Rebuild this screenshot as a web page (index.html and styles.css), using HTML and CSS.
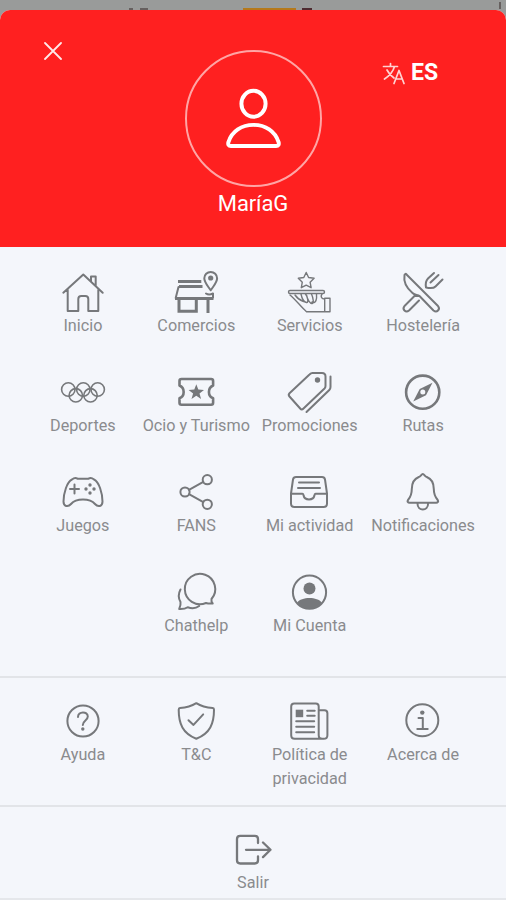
FILE: index.html
```html
<!DOCTYPE html>
<html lang="es">
<head>
<meta charset="utf-8">
<title>Menú</title>
<link rel="stylesheet" href="styles.css">
</head>
<body>
<div class="backdrop"><i class="mark m1"></i><i class="mark m2"></i><i class="mark amber"></i><i class="mark m3"></i><i class="mark m4"></i></div>
<main class="sheet">
  <header class="profile">
    <svg class="close" viewBox="0 0 20 20"><path d="M2 2 18 18M18 2 2 18"/></svg>
    <div class="user">
      <div class="avatar">
        <svg viewBox="0 0 60 64"><ellipse cx="30" cy="17" rx="12.3" ry="13.2"/><path d="M7 60h46q3.500 0 2.500-4C52 45 42 38.500 30 38.500S8 45 4.500 56q-1 4 2.500 4z"/></svg>
      </div>
      <div class="name">MaríaG</div>
    </div>
    <div class="lang">
      <svg viewBox="0 0 24 24"><path d="M1.500 4.500h14M8.500 1.500v3M12.500 4.500C11 10 7 14 2.500 17M5 8c2 4 4 6 7 8M12 21.500l5-13 5 13M13.800 17h6.400"/></svg>
      <span>ES</span>
    </div>
  </header>

  <nav class="grid main-grid">
    <a class="item"><svg viewBox="0 0 48 45"><path d="M4.300 23.700 24.300 5.500 43.700 23.700M8.700 20.500V42h10.600V30q0-3 3-3h4q3 0 3 3v12h10V20.500M32 12V7.500h4.700v9"/></svg><span>Inicio</span></a>
    <a class="item"><svg viewBox="0 0 48 45"><g class="bold"><path d="M6 12.500h23.300M7 17.500h23.500M3 29.500h38.500M7 31v11.300h17.300V31M36 31v13"/></g><path d="M6.500 18 3.700 29M34 24.500q3 2 7 0v4"/><path d="M38.700 21.300c-3-4.500-6.400-7.800-6.400-12a6.400 6.400 0 0 1 12.800 0c0 4.200-3.400 7.500-6.400 12z"/><circle class="fill" cx="38.700" cy="9" r="2.600"/></svg><span>Comercios</span></a>
    <a class="item"><svg class="thin" viewBox="0 0 48 45"><path d="m20.200 3.500 2.400 5 5.500.8-4 3.900 1 5.500-4.900-2.600-4.900 2.600 1-5.500-4-3.900 5.500-.8z"/><rect x="2.500" y="21.500" width="36" height="3" rx="1.500"/><path d="M4 26c6 5 11 12 16.500 16.700H38M9 26c2 3 6 5.500 8.500 6.500M15 25c1 5 3 8 5.500 8.500s1-6-1-8.500M20.500 26c1 5 3.500 8.500 5.500 8.500s1.500-5-.5-9.500M26 33c4 2 5-3 4.500-8M36 25c-2 3 0 5 2.500 5M38.700 29.300H44v13.400h-5.300z"/></svg><span>Servicios</span></a>
    <a class="item"><svg viewBox="0 0 48 45"><path d="M5.500 6c-1 6 2 13 8 18 3 3 5 1 7 3l14 14.500q2.500 2 4.500 0t0-4.500L7.500 5.500q-1-1.500-2 .5zM20 27l-4.500 0-10 10q-2 2.500 0 4.500t4.500 0L20 31.500M27 18.500q-1-6 2-9L35 4M27 18.500q7 1.500 9.500-1L43.500 10.500M31.500 13.500l8-7.500"/></svg><span>Hostelería</span></a>

    <a class="item"><svg class="thin rings" viewBox="0 0 48 45"><circle cx="9.300" cy="20.500" r="6.700"/><circle cx="24.300" cy="20.500" r="6.700"/><circle cx="38.700" cy="20.500" r="6.700"/><circle cx="16.800" cy="26.300" r="6.700"/><circle cx="31.500" cy="26.300" r="6.700"/></svg><span>Deportes</span></a>
    <a class="item"><svg viewBox="0 0 48 45"><path class="ticket" d="M9.500 10h29.600q2 0 2 2v4.500a7 7 0 0 0 0 12.800v4.500q0 2-2 2H9.500q-2 0-2-2v-4.500a7 7 0 0 0 0-12.800V12q0-2 2-2z"/><path class="fill" d="m24.300 15.300 2 5.300 5.700.3-4.500 3.500 1.600 5.600-4.800-3.200-4.800 3.200 1.600-5.600-4.500-3.500 5.700-.3z"/></svg><span>Ocio y Turismo</span></a>
    <a class="item"><svg viewBox="0 0 48 45"><path d="M26.500 4H36q3.500 0 3.500 3.500V17q0 1.500-1 2.500l-21 20q-1.800 1.800-3.300 0L3.500 27.500q-1.500-1.700 0-3.300l20-18.700Q25 4 26.500 4zM44.500 7.500V18q0 1.800-1.200 3L20.500 43"/><circle class="fill" cx="31.500" cy="11" r="2.700"/></svg><span>Promociones</span></a>
    <a class="item"><svg viewBox="0 0 48 45"><circle class="heavy" cx="23.700" cy="23.200" r="16.600"/><path class="fill" fill-rule="evenodd" d="M33.500 13.700 27 26.300 14.200 32.500l6.500-12.500zM23.800 20.600a2.500 2.500 0 1 0 0 5 2.500 2.500 0 0 0 0-5z"/></svg><span>Rutas</span></a>

    <a class="item"><svg viewBox="0 0 48 45"><path d="M13 10.500q3-2.500 5.500-.8h11Q32 8 35 10.500c5 2 8.500 14 8.500 22 0 5-4.500 6-7.500 2.500-5-6-19-6-24 0-3 3.500-7.500 2.500-7.500-2.500 0-8 3.500-20 8.500-22zM11 20h9M15.500 15.500v9"/><g class="fill"><circle cx="31" cy="16" r="1.700"/><circle cx="31" cy="24" r="1.700"/><circle cx="27" cy="20" r="1.700"/><circle cx="35" cy="20" r="1.700"/></g></svg><span>Juegos</span></a>
    <a class="item"><svg viewBox="0 0 48 45"><circle cx="35.300" cy="10.700" r="4.600"/><circle cx="13" cy="23" r="4.600"/><circle cx="35.300" cy="35.300" r="4.600"/><path d="m17 20.800 14.300-7.900M17 25.200l14.300 7.900"/></svg><span>FANS</span></a>
    <a class="item"><svg viewBox="0 0 48 45"><path d="M10 8h26q2.500 0 3 2.500l2 14v10q0 3.500-3.500 3.500h-29Q5 38 5 34.500v-10l2-14Q7.500 8 10 8zM5 24.800h11.500q1 0 1 1.500c1 5.500 10 5.500 11 0q0-1.500 1-1.500H41M13 13.500h20M12 19h22"/></svg><span>Mi actividad</span></a>
    <a class="item"><svg viewBox="0 0 48 45"><path d="M23.800 5c-1.500 0-2 2.500-4 3-5 2-7 6-7 12 0 5-.8 7.500-3.800 11-1 1.500 0 2.700 1.500 2.700h26.700c1.500 0 2.500-1.200 1.500-2.700-3-3.500-3.900-6-3.900-11 0-6-2-10-7-12-2-.5-2.500-3-4-3zM18.500 34.500c0 8 10.600 8 10.600 0"/></svg><span>Notificaciones</span></a>

    <a class="item second"><svg viewBox="0 0 48 45"><path d="M39.500 30a15.200 15.200 0 1 0-5.500 4q2.500.8 6.700.5-1.700-2-1.200-4.500zM8.500 20.500q-3.500 6.500 0 12.500.5 3-1.300 7 5.500.3 8.500-1.800c4.500 1.600 8.500 1 11.500-1.200"/></svg><span>Chathelp</span></a>
    <a class="item"><svg viewBox="0 0 48 45"><circle cx="23.500" cy="23.200" r="16.600"/><circle class="fill" cx="23.500" cy="19.500" r="6"/><path class="fill" d="M11.200 33.500c4-6 20.500-6 24.500 0-5.500 8-19 8-24.500 0z"/></svg><span>Mi Cuenta</span></a>
  </nav>

  <nav class="grid info-grid">
    <a class="item"><svg viewBox="0 0 48 45"><circle cx="24" cy="23" r="15.600"/><path d="M19 19c0-6 9.800-6 9.800-.5 0 4-5 4-5 8.500"/><circle class="fill" cx="23.800" cy="31" r="1.700"/></svg><span>Ayuda</span></a>
    <a class="item"><svg viewBox="0 0 48 45"><path d="M24.300 5.200C19 8.500 13 9.700 8 10q-1.300.2-1.300 1.700c0 14 4 23.500 17.600 29C38 35.200 42 25.700 42 11.700q0-1.500-1.300-1.700c-5-.3-11.200-1.500-16.400-4.800zM16.500 22.200l5 4.700 9.700-10.500"/></svg><span>T&amp;C</span></a>
    <a class="item"><svg viewBox="0 0 48 45"><g transform="translate(-.8 0)"><path d="M38.500 40.800H9.500Q6 40.800 6 37.300V8.500q0-3 3-3h21.500q3 0 3 3v28.800q0 3.500 3.500 3.500M33.500 12.200h5.700q3 0 3 3v22q0 3.600-3.700 3.600M22 12.700h7.500M22 17.700h7.500M11 23.300h18M11 28.800h18M11 34.300h18"/><path class="fill" d="M10.500 11.700h7.500v7.500h-7.500z"/></g></svg><span>Política de privacidad</span></a>
    <a class="item"><svg viewBox="0 0 48 45"><circle cx="23.300" cy="22.300" r="16"/><circle class="fill" cx="23.300" cy="14.600" r="2.200"/><path d="M19.500 20.100h4.300v11M18.300 31.100h10.400"/></svg><span>Acerca de</span></a>
  </nav>

  <nav class="exit">
    <a class="item"><svg class="door" viewBox="0 0 48 45"><path d="M29 17v-4q0-3.200-3.200-3.200H11.200Q8 9.800 8 13v21.300q0 3.200 3.200 3.200h14.600q3.200 0 3.200-3.200v-4M17 23.800h24M34 16.500l7.500 7.300-7.500 7.300"/></svg><span>Salir</span></a>
  </nav>
</main>
</body>
</html>
```
FILE: styles.css
```css
* { box-sizing: border-box; }
body {
  margin: 0;
  height: 900px;
  overflow: hidden;
  background: #9a9a9a;
  font-family: Roboto, "Liberation Sans", sans-serif;
}
svg {
  display: block;
  fill: none;
  stroke: currentColor;
  stroke-width: 2;
  stroke-linecap: round;
  stroke-linejoin: round;
}
.backdrop { position: relative; height: 10px; background: #999b9a; }
.mark { position: absolute; top: 8px; height: 2px; background: #66605f; }
.m1 { left: 129px; width: 4px; }
.m2 { left: 140px; width: 8px; }
.amber { left: 243px; width: 53px; background: #b5791b; }
.m3 { left: 302px; width: 10px; background: #4e2b30; }
.m4 { left: 499px; top: 2px; width: 2px; height: 7px; }
.sheet {
  height: 890px;
  border-radius: 10px 10px 0 0;
  overflow: hidden;
  background: #f4f6fb;
  border-bottom: 2px solid #e5e7eb;
}
.profile {
  display: grid;
  grid-template-columns: 1fr 137px 1fr;
  height: 237px;
  padding-top: 40px;
  background: #ff2020;
  color: #fff;
}
.close { width: 20px; height: 20px; margin: -9px 0 0 43px; stroke-width: 1.8; opacity: .9; }
.user { display: flex; flex-direction: column; align-items: center; }
.avatar {
  display: flex;
  justify-content: center;
  width: 137px;
  height: 137px;
  margin-left: 1px;
  padding-top: 35px;
  border: 2px solid #ffa5a5;
  border-radius: 50%;
}
.avatar svg { width: 59px; height: 63px; stroke-width: 4; }
.name { margin-top: 3px; font-size: 22px; line-height: 28px; letter-spacing: -.1px; }
.lang { display: flex; align-items: flex-start; gap: 5px; padding: 12px 0 0 60.500px; }
.lang svg { width: 24px; height: 24px; stroke-width: 1.7; opacity: .8; }
.lang span { font-size: 23px; font-weight: 700; line-height: 22px; }
.grid {
  display: grid;
  grid-template-columns: repeat(4, 113.4px);
  justify-content: center;
  border-bottom: 2px solid #e2e4e8;
}
.main-grid { height: 431px; padding-top: 21.500px; grid-auto-rows: 100.2px; }
.info-grid { height: 129px; padding-top: 19.500px; }
.exit { display: flex; justify-content: center; padding-top: 19px; }
.item { display: flex; flex-direction: column; align-items: center; color: #76787b; }
.item svg { width: 48px; height: 45px; }
.item span {
  font-size: 16.200px;
  line-height: 24px;
  text-align: center;
  white-space: nowrap;
  color: #8a8b8e;
}
.info-grid .item span { max-width: 100px; white-space: normal; }
.second { grid-column: 2; }
.item .thin { stroke-width: 1.4; }
.item .rings { stroke-width: 1.6; }
.item .door { stroke-width: 2.300; }
.bold { stroke-width: 3; stroke-linecap: butt; stroke-linejoin: miter; }
.heavy { stroke-width: 2.600; }
.ticket { stroke-width: 2.600; }
.fill { fill: currentColor; stroke: none; }
```
